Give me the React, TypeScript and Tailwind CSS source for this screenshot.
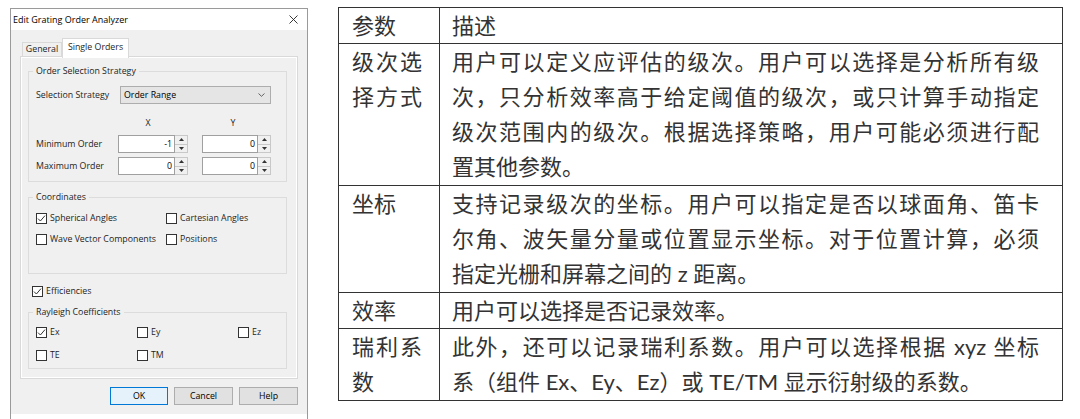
import React from "react";

const Box = ({ checked }: { checked?: boolean }) => (
  <span className="inline-flex w-[11px] h-[11px] border border-[#333] bg-white shrink-0 items-center justify-center">
    {checked && (
      <svg width="9" height="9" viewBox="0 0 9 9">
        <path d="M1 4.6 L3.4 7 L8 1.6" fill="none" stroke="#333" strokeWidth="1" />
      </svg>
    )}
  </span>
);

const CheckItem = ({ label, checked, cls }: { label: string; checked?: boolean; cls: string }) => (
  <div className={cls}>
    <Box checked={checked} />
    <span className="ml-[3px] leading-[12px] whitespace-nowrap">{label}</span>
  </div>
);

const Spin = ({ value, cls }: { value: string; cls: string }) => (
  <div className={cls}>
    <div className="flex-1 h-full bg-white border border-[#a0a0a0] text-right pr-[2px] leading-[16px] text-black">{value}</div>
    <div className="w-[13px] h-full flex flex-col bg-[#f0f0f0] border border-l-0 border-[#c8c8c8]">
      <div className="flex-1 flex items-center justify-center">
        <svg width="5" height="3" viewBox="0 0 5 3">
          <path d="M0 3 L2.5 0 L5 3 Z" fill="#333" />
        </svg>
      </div>
      <div className="h-px bg-[#c8c8c8]" />
      <div className="flex-1 flex items-center justify-center">
        <svg width="5" height="3" viewBox="0 0 5 3">
          <path d="M0 0 L2.5 3 L5 0 Z" fill="#333" />
        </svg>
      </div>
    </div>
  </div>
);

const Dialog = () => (
  <div className="ml-[10px] mt-[8px] w-[298px] h-[411px] shrink-0 border border-b-0 border-[#9a9a9a] bg-[#f0f0f0] flex flex-col font-['Open_Sans',sans-serif] text-[8.8px] text-[#1e1e1e]">
    <div className="h-[21px] bg-white flex items-center justify-between pl-[2px] pr-[9px] text-[9px] text-black">
      <span className="leading-[12px]">Edit Grating Order Analyzer</span>
      <svg width="9" height="9" viewBox="0 0 9 9">
        <path d="M0.5 0.5 L8.5 8.5 M8.5 0.5 L0.5 8.5" stroke="#222" strokeWidth="0.9" fill="none" />
      </svg>
    </div>
    <div className="flex-1 flex flex-col">
      <div className="mt-[8px] ml-[11px] h-[18px] flex items-end relative z-10">
        <div className="w-[40px] h-[14px] border border-b-0 border-[#d9d9d9] bg-[#f0f0f0] text-center leading-[13px]">General</div>
        <div className="w-[67px] h-[20px] -mb-[2px] border border-b-0 border-[#d9d9d9] bg-white text-center leading-[17px]">Single Orders</div>
      </div>
      <div className="ml-[9px] w-[278px] h-[323px] border border-[#d9d9d9] bg-white p-px">
        <div className="h-full bg-[#f0f0f0] px-[6px] pt-px">
          <fieldset className="mt-[6px] w-[259px] border border-[#dcdcdc] px-[4px] pb-[6px]">
            <legend className="px-[3px] leading-[12px]">Order Selection Strategy</legend>
            <div className="pl-[3px]">
              <div className="mt-[9px] flex items-center h-[18px]">
                <span className="w-[84px] leading-[12px]">Selection Strategy</span>
                <div className="w-[151px] h-[18px] bg-[#e5e5e5] border border-[#adadad] flex items-center justify-between pl-[3px] pr-[5px] text-black">
                  <span className="leading-[12px]">Order Range</span>
                  <svg width="7" height="4" viewBox="0 0 7 4">
                    <path d="M0.5 0.5 L3.5 3.3 L6.5 0.5" fill="none" stroke="#555" strokeWidth="0.9" />
                  </svg>
                </div>
              </div>
              <div className="mt-[13px] h-[12px] flex leading-[12px]">
                <span className="w-[82px]" />
                <span className="w-[60px] text-center">X</span>
                <span className="w-[24px]" />
                <span className="w-[62px] text-center">Y</span>
              </div>
              <div className="mt-[6px] flex items-center h-[18px]">
                <span className="w-[82px] leading-[12px]">Minimum Order</span>
                <Spin value="-1" cls="w-[70px] h-[18px] flex" />
                <Spin value="0" cls="ml-[14px] w-[69px] h-[18px] flex" />
              </div>
              <div className="mt-[4px] flex items-center h-[18px]">
                <span className="w-[82px] leading-[12px]">Maximum Order</span>
                <Spin value="0" cls="w-[70px] h-[18px] flex" />
                <Spin value="0" cls="ml-[14px] w-[69px] h-[18px] flex" />
              </div>
            </div>
          </fieldset>
          <fieldset className="mt-[9px] w-[259px] border border-[#dcdcdc] px-[4px] pb-[27px]">
            <legend className="px-[3px] leading-[12px]">Coordinates</legend>
            <div className="pl-[3px]">
              <div className="mt-[8px] flex h-[14px]">
                <CheckItem label="Spherical Angles" checked cls="w-[130px] flex items-center" />
                <CheckItem label="Cartesian Angles" cls="flex items-center" />
              </div>
              <div className="mt-[7px] flex h-[14px]">
                <CheckItem label="Wave Vector Components" cls="w-[130px] flex items-center" />
                <CheckItem label="Positions" cls="flex items-center" />
              </div>
            </div>
          </fieldset>
          <div className="mt-[10px] ml-[4px] h-[14px] flex">
            <CheckItem label="Efficiencies" checked cls="flex items-center" />
          </div>
          <fieldset className="mt-[8px] w-[259px] border border-[#dcdcdc] px-[4px] pb-[6px]">
            <legend className="px-[3px] leading-[12px]">Rayleigh Coefficients</legend>
            <div className="pl-[3px]">
              <div className="mt-[7px] flex h-[14px]">
                <CheckItem label="Ex" checked cls="w-[101px] flex items-center" />
                <CheckItem label="Ey" cls="w-[101px] flex items-center" />
                <CheckItem label="Ez" cls="flex items-center" />
              </div>
              <div className="mt-[9px] flex h-[14px]">
                <CheckItem label="TE" cls="w-[101px] flex items-center" />
                <CheckItem label="TM" cls="flex items-center" />
              </div>
            </div>
          </fieldset>
        </div>
      </div>
      <div className="mt-[8px] pr-[9px] flex justify-end gap-[6px] text-black">
        <div className="w-[58px] h-[18px] border border-[#0078d7] bg-[#e5f1fb] text-center leading-[16px]">OK</div>
        <div className="w-[59px] h-[18px] border border-[#adadad] bg-[#e1e1e1] text-center leading-[16px]">Cancel</div>
        <div className="w-[59px] h-[18px] border border-[#adadad] bg-[#e1e1e1] text-center leading-[16px]">Help</div>
      </div>
    </div>
    <div className="h-[5px] bg-white" />
  </div>
);

const JR = "w-[587px] text-justify [text-align-last:justify] whitespace-nowrap";
const JL = "w-[70px] text-justify [text-align-last:justify] whitespace-nowrap";

const Row = ({ h, last, left, right }: { h: string; last?: boolean; left: React.ReactNode; right: React.ReactNode }) => (
  <div className={`${h} flex ${last ? "" : "border-b border-[#333]"}`}>
    <div className="w-[101px] shrink-0 border-r border-[#333] pl-[13px]">{left}</div>
    <div className="flex-1 pl-[12px]">{right}</div>
  </div>
);

const Table = () => (
  <div className="ml-[30px] mt-[7px] w-[725px] shrink-0 border border-[#333] font-['Lato','Noto_Sans_CJK_SC',sans-serif] text-[22px] leading-[35px] text-[#333]">
    <Row h="h-[36px]" left={<div>参数</div>} right={<div>描述</div>} />
    <Row
      h="h-[142px]"
      left={
        <>
          <div className={JL}>级次选</div>
          <div className={JL}>择方式</div>
        </>
      }
      right={
        <>
          <div className={JR}>用户可以定义应评估的级次。用户可以选择是分析所有级</div>
          <div className={JR}>次，只分析效率高于给定阈值的级次，或只计算手动指定</div>
          <div className={JR}>级次范围内的级次。根据选择策略，用户可能必须进行配</div>
          <div>置其他参数。</div>
        </>
      }
    />
    <Row
      h="h-[107px]"
      left={<div>坐标</div>}
      right={
        <>
          <div className={JR}>支持记录级次的坐标。用户可以指定是否以球面角、笛卡</div>
          <div className={JR}>尔角、波矢量分量或位置显示坐标。对于位置计算，必须</div>
          <div>指定光栅和屏幕之间的 z 距离。</div>
        </>
      }
    />
    <Row h="h-[36px]" left={<div>效率</div>} right={<div>用户可以选择是否记录效率。</div>} />
    <Row
      h="h-[71px]"
      last
      left={
        <>
          <div className={JL}>瑞利系</div>
          <div>数</div>
        </>
      }
      right={
        <>
          <div className={JR}>此外，还可以记录瑞利系数。用户可以选择根据 xyz 坐标</div>
          <div>系（组件 Ex、Ey、Ez）或 TE/TM 显示衍射级的系数。</div>
        </>
      }
    />
  </div>
);

export default function App() {
  return (
    <div className="w-[1080px] h-[419px] bg-white flex items-start overflow-hidden">
      <Dialog />
      <Table />
    </div>
  );
}
